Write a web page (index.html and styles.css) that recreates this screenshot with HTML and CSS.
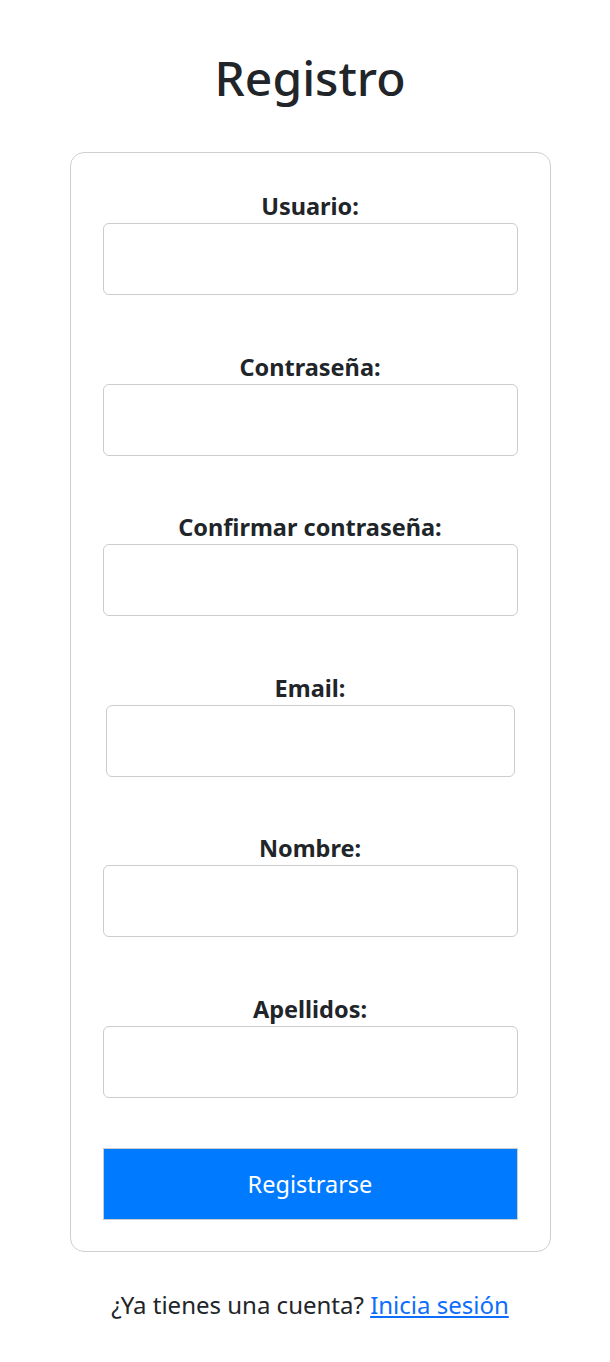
FILE: index.html
```html
<!DOCTYPE html>
<html lang="es">
<head>
<meta charset="utf-8">
<title>Registro</title>
<link rel="stylesheet" href="styles.css">
</head>
<body>
<div class="page">
  <h1 class="title">Registro</h1>
  <form class="card">
    <div class="field">
      <label class="label" for="u">Usuario:</label>
      <input class="input" id="u" type="text">
    </div>
    <div class="field">
      <label class="label" for="p">Contraseña:</label>
      <input class="input" id="p" type="password">
    </div>
    <div class="field">
      <label class="label" for="p2">Confirmar contraseña:</label>
      <input class="input" id="p2" type="password">
    </div>
    <div class="field">
      <label class="label" for="e">Email:</label>
      <input class="input input-email" id="e" type="email">
    </div>
    <div class="field">
      <label class="label" for="n">Nombre:</label>
      <input class="input" id="n" type="text">
    </div>
    <div class="field">
      <label class="label" for="a">Apellidos:</label>
      <input class="input" id="a" type="text">
    </div>
    <button class="btn" type="button">Registrarse</button>
  </form>
  <p class="footer">¿Ya tienes una cuenta? <a class="link" href="#">Inicia sesión</a></p>
</div>
</body>
</html>
```
FILE: styles.css
```css
html, body {
  margin: 0;
  padding: 0;
  background: #fff;
}
body {
  font-family: "Noto Sans", "Open Sans", sans-serif;
  color: #212529;
}
.page {
  width: 600px;
  margin-left: 10px;
  display: flex;
  flex-direction: column;
  align-items: center;
}
.title {
  margin: 48px 0 0;
  font-size: 48px;
  font-weight: 500;
  line-height: 60px;
  height: 60px;
  text-align: center;
}
.card {
  box-sizing: border-box;
  margin-top: 44px;
  width: 481px;
  border: 1px solid #cfcfcf;
  border-radius: 14px;
  padding: 39px 32px 31px;
  display: flex;
  flex-direction: column;
  align-items: center;
}
.field {
  width: 100%;
  display: flex;
  flex-direction: column;
  align-items: center;
  margin-bottom: 57.6px;
}
.field:last-of-type {
  margin-bottom: 50px;
}
.label {
  display: block;
  font-size: 23.5px;
  font-weight: 700;
  line-height: 28px;
  margin-bottom: 3px;
}
.input {
  box-sizing: border-box;
  width: 415px;
  height: 72px;
  border: 1px solid #cccccc;
  border-radius: 6px;
  background: #fff;
  font-size: 16px;
  padding: 0 12px;
}
.input-email {
  width: 409px;
}
.btn {
  box-sizing: border-box;
  width: 415px;
  height: 72px;
  background: #007bff;
  color: #fff;
  border: 1px solid #cccccc;
  border-radius: 0;
  font-family: "Noto Sans", "Open Sans", sans-serif;
  font-size: 23.5px;
  cursor: pointer;
}
.footer {
  margin: 37px 0 0;
  font-size: 24px;
  line-height: 32px;
  text-align: center;
}
.link {
  color: #0d6efd;
  text-decoration: underline;
}
```
